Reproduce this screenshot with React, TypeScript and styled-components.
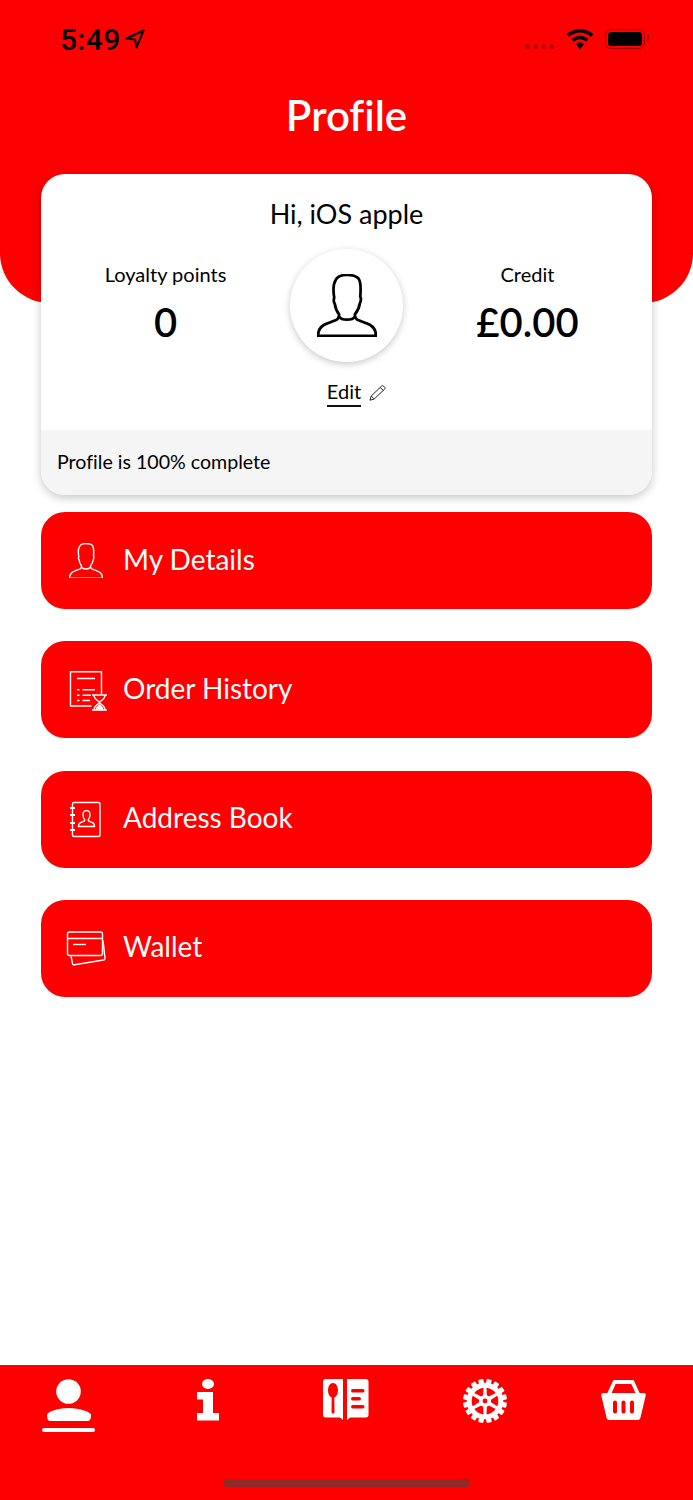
import React from 'react'
import styled, { createGlobalStyle } from 'styled-components'

const RED = '#ff0000'

const GlobalStyle = createGlobalStyle`
  html, body {
    margin: 0;
    padding: 0;
    background: #fff;
  }
  * {
    box-sizing: border-box;
  }
`

const PERSON_PATH =
  'M1 63C1 56 5 52 11 50L20 46.5C22 45.5 22.5 44 22.5 41C20 38 18.5 34 18 30C17 29 17 26 17.5 24C16.5 18 16.5 10 19 6C21 2.5 25 1 30 1C35 1 40 2 42.5 5C45 9 44.5 17 44 23C45 25 44.5 28 43.5 30C43 34 41 38 38.5 41C38.5 44 39 45.5 41 46.5L50 50C56 52 60 56 60 63Z'

const PersonOutline = ({ size, color, stroke }: { size: number; color: string; stroke: number }) => (
  <svg width={size} height={(size * 64) / 61} viewBox="0 0 61 64" fill="none" stroke={color} strokeWidth={stroke} strokeLinejoin="round">
    <path d={PERSON_PATH} />
    <path d="M22.5 43.5C25 47.5 36 47.5 38.5 43.5" />
  </svg>
)

const LocationArrow = () => (
  <svg width="20" height="20" viewBox="0 0 20 20" fill="none" stroke="#000" strokeWidth="2" strokeLinejoin="round">
    <path d="M1.5 9.5L18.5 1.5L11.5 18.5L10 10.5Z" />
  </svg>
)

const Wifi = () => (
  <svg width="28" height="21" viewBox="0 0 28 21" fill="#000">
    <path d="M14 0C8.8 0 4 2 .6 5.3L3 7.8C5.9 5 9.8 3.4 14 3.4S22.1 5 25 7.8L27.4 5.3C24 2 19.2 0 14 0Z" />
    <path d="M14 6.8C10.7 6.8 7.7 8.1 5.5 10.2L7.9 12.7C9.5 11.2 11.6 10.2 14 10.2S18.5 11.2 20.1 12.7L22.5 10.2C20.3 8.1 17.3 6.8 14 6.8Z" />
    <path d="M14 13.4C12.4 13.4 11 14 9.9 15L14 20.5L18.1 15C17 14 15.6 13.4 14 13.4Z" />
  </svg>
)

const HistoryIcon = () => (
  <svg width="44" height="44" viewBox="0 0 44 44" fill="none" stroke="#fff" strokeWidth="1.4">
    <path d="M27.500 38H6.500V3.800H37.500V26" />
    <path d="M13 10.500H31M13 21.800H15.500M18.500 21.800H31M13 27.200H15.500M18.500 27.200H27M13 32.500H15.500M18.500 32.500H26" />
    <path d="M28 27H43M28 42H43M30 27C30 32 35.500 33 35.500 34.500C35.500 36 30 37 30 42M41 27C41 32 35.500 33 35.500 34.500C35.500 36 41 37 41 42" />
    <path d="M32.500 41V40L35.500 37L38.500 40V41Z" fill="#fff" />
  </svg>
)

const AddressIcon = () => (
  <svg width="44" height="44" viewBox="0 0 44 44" fill="none" stroke="#fff" strokeWidth="1.4">
    <rect x="8.500" y="5.500" width="27.500" height="34" rx="1.500" />
    <path d="M6 11H11M6 18H11M6 26H11M6 33H11" strokeWidth="2.200" />
    <path d="M14.500 29.500C14.500 26.500 16 25.500 18 25L20.500 24C20.800 23.400 20.800 22.800 20.600 22.400C19.600 21.400 19.200 20 19 18.500C18.700 15.500 20 13.500 22.500 13.500S26.300 15.500 26 18.500C25.800 20 25.400 21.400 24.400 22.400C24.200 22.800 24.200 23.400 24.500 24L27 25C29 25.500 30.500 26.500 30.500 29.500Z" />
  </svg>
)

const WalletIcon = () => (
  <svg width="44" height="44" viewBox="0 0 44 44" fill="none" stroke="#fff" strokeWidth="1.4">
    <rect x="3.500" y="6" width="35" height="23.500" rx="2" />
    <path d="M3.500 12.500H38.500" />
    <path d="M9 18.500H22" />
    <path d="M7 30L8.500 37.500C8.700 38.600 9.500 39 10.500 38.800L39.500 34C40.600 33.800 41.200 33 41 32L39 14.500" />
  </svg>
)

const Pencil = () => (
  <svg width="17" height="16" viewBox="0 0 17 16" fill="none" stroke="#222" strokeWidth="1" strokeLinejoin="round">
    <path d="M1 15.200L2.200 11L12.500 1.200C13.200 .6 14 .6 14.700 1.200L15.600 2.100C16.200 2.800 16.200 3.500 15.600 4.200L5.200 14Z" />
    <path d="M2.200 11L5.200 14M11.200 2.500L14.300 5.500" />
  </svg>
)

const TabProfile = () => (
  <svg width="54" height="54" viewBox="0 0 54 54" fill="#fff">
    <circle cx="26.500" cy="12.500" r="12.300" />
    <path d="M5 36C5 33 15 29 26.500 29S49 33 49 36C49 40 48 42 45 42H8C6 42 5 40 5 36Z" />
    <rect x="0" y="49" width="53" height="4" rx="2" />
  </svg>
)

const TabInfo = () => (
  <svg width="24" height="42" viewBox="0 0 24 42" fill="#fff">
    <ellipse cx="12" cy="5" rx="6" ry="5" />
    <path d="M1 13H17V34H23V41.500H1V34H7V20.500H1Z" />
  </svg>
)

const TabMenu = () => (
  <svg width="46" height="42" viewBox="0 0 46 42">
    <path d="M2.500 0H20V41L17 38.500H2.500C1 38.500 0 37.500 0 36V2.500C0 1 1 0 2.500 0Z" fill="#fff" />
    <path d="M24 0H43C44.500 0 45.500 1 45.500 2.500V36C45.500 37.500 44.500 38.500 43 38.500H27L24 41Z" fill="#fff" />
    <path d="M10 4C7 4 5 7.500 5 11.500C5 15 6.500 17.500 8.700 18.500L8.500 33C8.500 35 11.500 35 11.500 33L11.300 18.500C13.500 17.500 15 15 15 11.500C15 7.500 13 4 10 4Z" fill={RED} />
    <rect x="28" y="10" width="13.500" height="3.500" rx="1.700" fill={RED} />
    <rect x="28" y="18" width="10" height="3.500" rx="1.700" fill={RED} />
    <rect x="28" y="26" width="13.500" height="3.500" rx="1.700" fill={RED} />
  </svg>
)

const TabGear = () => (
  <svg width="44" height="44" viewBox="0 0 44 44">
    {Array.from({ length: 16 }, (_, i) => (
      <rect key={i} x="19.400" y="0" width="5.200" height="6" rx="1" fill="#fff" transform={`rotate(${i * 22.5 + 11.25} 22 22)`} />
    ))}
    <circle cx="22" cy="22" r="15.800" fill="none" stroke="#fff" strokeWidth="5" />
    {Array.from({ length: 6 }, (_, i) => (
      <path key={i} d="M20.600 7H23.400L24.200 22H19.800Z" fill="#fff" transform={`rotate(${i * 60} 22 22)`} />
    ))}
    <circle cx="22" cy="22" r="6" fill="#fff" />
    <circle cx="22" cy="22" r="2.400" fill={RED} />
  </svg>
)

const TabBasket = () => (
  <svg width="45" height="42" viewBox="0 0 45 42">
    <path d="M8 15L13.500 3H31.500L37 15" fill="none" stroke="#fff" strokeWidth="3.800" strokeLinejoin="round" />
    <path d="M2 14H43C44.500 14 45 15 44.700 16.500L39.500 38.500C39 40.500 38 41 36 41H9C7 41 6 40.500 5.500 38.500L.3 16.500C0 15 .5 14 2 14Z" fill="#fff" />
    <rect x="12" y="21.500" width="4" height="13" rx="2" fill={RED} />
    <rect x="20.500" y="21.500" width="4" height="13" rx="2" fill={RED} />
    <rect x="29" y="21.500" width="4" height="13" rx="2" fill={RED} />
  </svg>
)

const menuItems = [
  { label: 'My Details', icon: <PersonOutline size={34} color="#fff" stroke={2.6} /> },
  { label: 'Order History', icon: <HistoryIcon /> },
  { label: 'Address Book', icon: <AddressIcon /> },
  { label: 'Wallet', icon: <WalletIcon /> },
]

const tabs = [<TabProfile />, <TabInfo />, <TabMenu />, <TabGear />, <TabBasket />]

export default function App() {
  return (
    <>
      <GlobalStyle />
      <Screen>
        <Header>
          <StatusBar>
            <TimeGroup>
              <Time>5:49</Time>
              <LocationArrow />
            </TimeGroup>
            <StatusIcons>
              <Dots>
                <Dot />
                <Dot />
                <Dot />
                <Dot />
              </Dots>
              <Wifi />
              <Battery>
                <BatteryFill />
              </Battery>
            </StatusIcons>
          </StatusBar>
          <Title>Profile</Title>
        </Header>
        <Content>
          <Card>
            <Greeting>Hi, iOS apple</Greeting>
            <Stats>
              <Stat>
                <StatLabel>Loyalty points</StatLabel>
                <StatValue>0</StatValue>
              </Stat>
              <AvatarColumn>
                <Avatar>
                  <PersonOutline size={60} color="#000" stroke={2.8} />
                </Avatar>
                <EditRow>
                  <EditLink>Edit</EditLink>
                  <Pencil />
                </EditRow>
              </AvatarColumn>
              <Stat>
                <StatLabel>Credit</StatLabel>
                <StatValue>£0.00</StatValue>
              </Stat>
            </Stats>
            <CardFooter>Profile is 100% complete</CardFooter>
          </Card>
          <Menu>
            {menuItems.map((item) => (
              <MenuButton key={item.label}>
                <IconBox>{item.icon}</IconBox>
                <MenuLabel>{item.label}</MenuLabel>
              </MenuButton>
            ))}
          </Menu>
        </Content>
        <TabBar>
          <TabRow>
            {tabs.map((icon, i) => (
              <Tab key={i}>{icon}</Tab>
            ))}
          </TabRow>
          <HomeIndicator />
        </TabBar>
      </Screen>
    </>
  )
}

const Screen = styled('div')`
  width: 693px;
  height: 1500px;
  display: flex;
  flex-direction: column;
  overflow: hidden;
  background: #fff;
  font-family: 'Lato', 'Liberation Sans', sans-serif;
  font-variant-ligatures: none;
  color: #000;
`

const Header = styled('header')`
  height: 303px;
  flex: none;
  padding: 20px 48px 0 60px;
  background: ${RED};
  border-radius: 0 0 50px 50px;
`

const StatusBar = styled('div')`
  height: 38px;
  display: flex;
  align-items: center;
  justify-content: space-between;
`

const TimeGroup = styled('div')`
  display: flex;
  align-items: center;
  gap: 4px;
`

const Time = styled('span')`
  font-family: 'Roboto', 'Liberation Sans', sans-serif;
  font-size: 30px;
  font-weight: 500;
  letter-spacing: 0.4px;
`

const StatusIcons = styled('div')`
  display: flex;
  align-items: center;
`

const Dots = styled('div')`
  display: flex;
  gap: 3px;
  margin: 14px 12px 0 0;
`

const Dot = styled('span')`
  width: 5px;
  height: 5px;
  border-radius: 50%;
  background: #b30000;
`

const Battery = styled('div')`
  position: relative;
  width: 40px;
  height: 20px;
  margin-left: 11px;
  padding: 2px;
  border: 1.500px solid #a00000;
  border-radius: 6px;

  &::after {
    content: '';
    position: absolute;
    top: 4px;
    right: -5px;
    width: 2px;
    height: 7px;
    border-radius: 0 2px 2px 0;
    background: #a00000;
  }
`

const BatteryFill = styled('div')`
  width: 100%;
  height: 100%;
  border-radius: 3px;
  background: #000;
`

const Title = styled('h1')`
  margin: 32px -48px 0 -60px;
  color: #fff;
  font-size: 42px;
  font-weight: 600;
  line-height: 50px;
  text-align: center;
`

const Content = styled('main')`
  margin-top: -129px;
  padding: 0 41px;
  position: relative;
`

const Card = styled('section')`
  height: 321px;
  display: flex;
  flex-direction: column;
  overflow: hidden;
  background: #fff;
  border-radius: 24px;
  box-shadow: 0 3px 10px rgba(0, 0, 0, 0.22);
`

const Greeting = styled('div')`
  padding-top: 24px;
  font-size: 27px;
  line-height: 32px;
  text-align: center;
`

const Stats = styled('div')`
  flex: 1;
  padding: 19px 34px 0;
  display: grid;
  grid-template-columns: repeat(3, 1fr);
`

const Stat = styled('div')`
  padding-top: 11px;
  display: flex;
  flex-direction: column;
  align-items: center;
`

const StatLabel = styled('span')`
  font-size: 20px;
  line-height: 28px;
`

const StatValue = styled('span')`
  margin-top: 9px;
  font-size: 40px;
  font-weight: 600;
  line-height: 50px;
`

const AvatarColumn = styled('div')`
  display: flex;
  flex-direction: column;
  align-items: center;
`

const Avatar = styled('div')`
  width: 113px;
  height: 113px;
  display: flex;
  align-items: center;
  justify-content: center;
  border-radius: 50%;
  background: #fff;
  box-shadow: 0 2px 7px rgba(0, 0, 0, 0.22);
`

const EditRow = styled('div')`
  margin: 17px 0 0 20px;
  display: flex;
  align-items: center;
  gap: 8px;
`

const EditLink = styled('span')`
  padding-bottom: 1px;
  border-bottom: 2px solid #111;
  font-size: 20px;
  line-height: 25px;
`

const CardFooter = styled('div')`
  height: 65px;
  flex: none;
  padding: 0 0 2px 16px;
  display: flex;
  align-items: center;
  background: #f5f5f5;
  font-size: 19.600px;
`

const Menu = styled('div')`
  margin-top: 17px;
  display: flex;
  flex-direction: column;
  gap: 32.300px;
`

const MenuButton = styled('div')`
  height: 97px;
  padding-left: 23px;
  display: flex;
  align-items: center;
  gap: 15px;
  background: ${RED};
  border-radius: 24px;
  color: #fff;
  font-size: 28px;
`

const MenuLabel = styled('span')`
  padding-bottom: 4px;
`

const IconBox = styled('span')`
  width: 44px;
  height: 44px;
  display: flex;
  align-items: center;
  justify-content: center;
`

const TabBar = styled('nav')`
  height: 135px;
  margin-top: auto;
  padding-top: 14px;
  display: flex;
  flex-direction: column;
  background: ${RED};
`

const TabRow = styled('div')`
  display: grid;
  grid-template-columns: repeat(5, 1fr);
`

const Tab = styled('div')`
  height: 54px;
  display: flex;
  justify-content: center;
`

const HomeIndicator = styled('div')`
  width: 247px;
  height: 8px;
  margin: 46px auto 0;
  border-radius: 4px;
  background: #8e2a2a;
`
